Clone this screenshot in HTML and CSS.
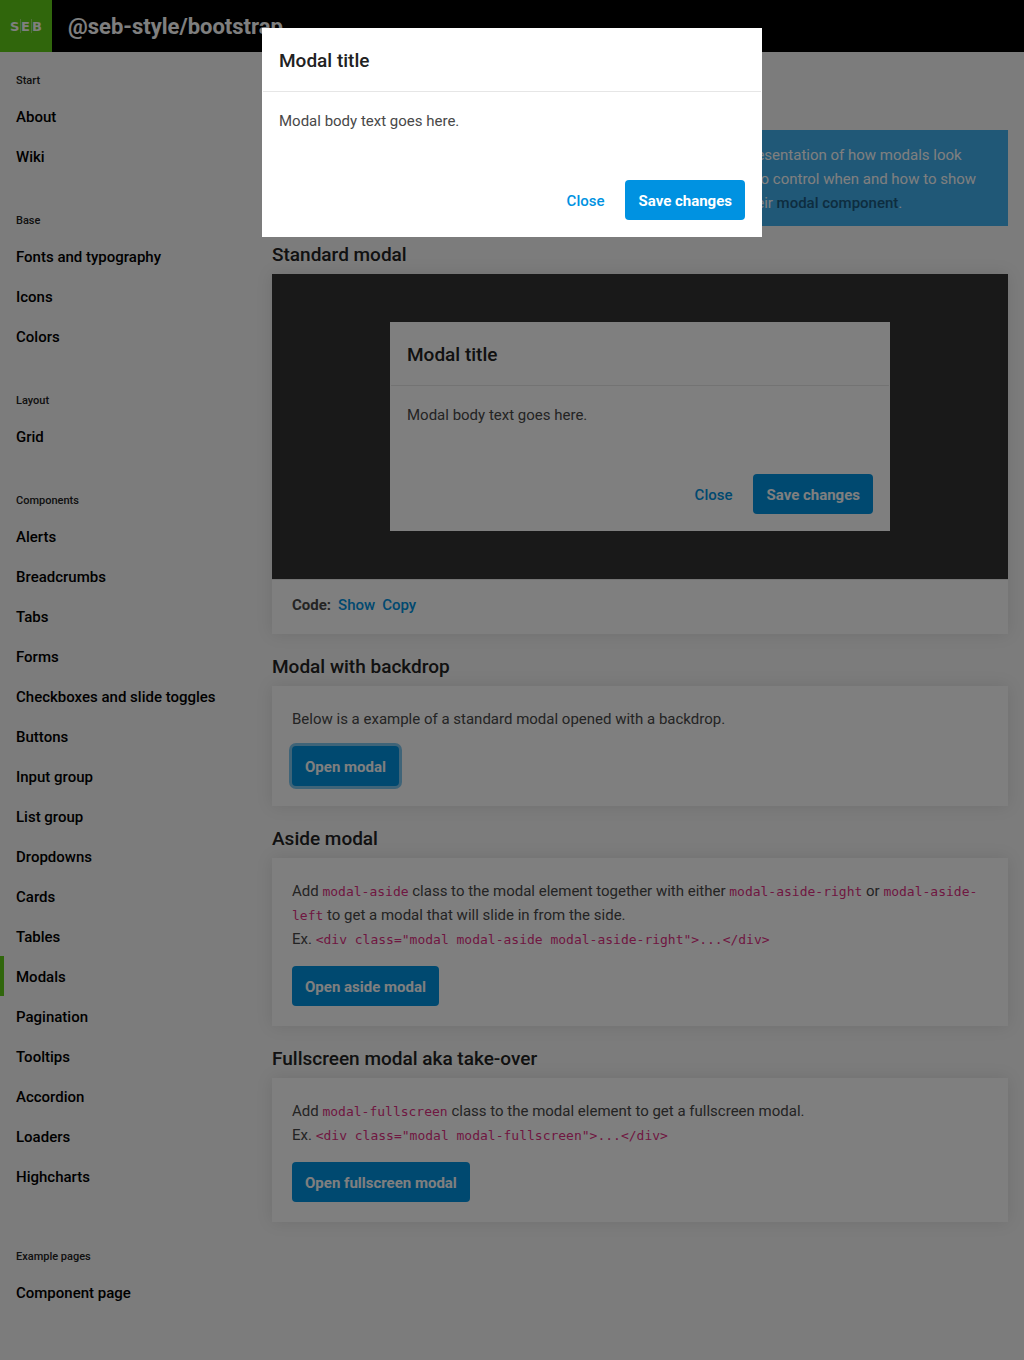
FILE: index.html
```html
<!DOCTYPE html>
<html lang="en">
<head>
<meta charset="utf-8">
<meta name="viewport" content="width=device-width, initial-scale=1">
<title>Modals - @seb-style/bootstrap</title>
<link rel="stylesheet" href="styles.css">
</head>
<body>
<header class="topbar">
  <a class="logo" href="#" aria-label="SEB">
    <svg width="52" height="52" viewBox="0 0 52 52" aria-hidden="true">
      <g class="logo-letters"><text x="10" y="31">S</text><text x="21" y="31">E</text><text x="32" y="31">B</text></g>
      <path class="logo-bars" d="M20.5 19v14M31.5 19v14"/>
    </svg>
  </a>
  <span class="brand">@seb-style/bootstrap</span>
</header>
<div class="layout">
  <nav class="sidebar" aria-label="Main">
    <section class="group">
      <h2 class="group-title">Start</h2>
      <a class="item" href="#">About</a>
      <a class="item" href="#">Wiki</a>
    </section>
    <section class="group">
      <h2 class="group-title">Base</h2>
      <a class="item" href="#">Fonts and typography</a>
      <a class="item" href="#">Icons</a>
      <a class="item" href="#">Colors</a>
    </section>
    <section class="group">
      <h2 class="group-title">Layout</h2>
      <a class="item" href="#">Grid</a>
    </section>
    <section class="group">
      <h2 class="group-title">Components</h2>
      <a class="item" href="#">Alerts</a>
      <a class="item" href="#">Breadcrumbs</a>
      <a class="item" href="#">Tabs</a>
      <a class="item" href="#">Forms</a>
      <a class="item" href="#">Checkboxes and slide toggles</a>
      <a class="item" href="#">Buttons</a>
      <a class="item" href="#">Input group</a>
      <a class="item" href="#">List group</a>
      <a class="item" href="#">Dropdowns</a>
      <a class="item" href="#">Cards</a>
      <a class="item" href="#">Tables</a>
      <a class="item active" href="#" aria-current="page">Modals</a>
      <a class="item" href="#">Pagination</a>
      <a class="item" href="#">Tooltips</a>
      <a class="item" href="#">Accordion</a>
      <a class="item" href="#">Loaders</a>
      <a class="item" href="#">Highcharts</a>
    </section>
    <section class="group examples">
      <h2 class="group-title">Example pages</h2>
      <a class="item" href="#">Component page</a>
    </section>
  </nav>
  <main class="content">
    <h1 class="page-title">Modals</h1>
    <p class="alert">Please note that the examples on this page are only to be a visual representation of how modals look<br>and that they use some scripting added by your own application code to control when and how to show<br>one. If you are using Angular then we recommend ng-bootstrap and their <a href="#">modal component</a>.</p>
    <section class="example">
      <h2 class="heading">Standard modal</h2>
      <div class="card">
        <div class="stage">
          <div class="modal">
            <div class="modal-header"><h3 class="modal-title">Modal title</h3></div>
            <div class="modal-body"><p>Modal body text goes here.</p></div>
            <div class="modal-footer">
              <button class="btn btn-link" type="button">Close</button>
              <button class="btn btn-primary" type="button">Save changes</button>
            </div>
          </div>
        </div>
        <div class="code-bar"><strong>Code:</strong><a href="#">Show</a><a href="#">Copy</a></div>
      </div>
    </section>
    <section class="example">
      <h2 class="heading">Modal with backdrop</h2>
      <div class="card card-body">
        <p>Below is a example of a standard modal opened with a backdrop.</p>
        <button class="btn btn-primary is-focused" type="button">Open modal</button>
      </div>
    </section>
    <section class="example">
      <h2 class="heading">Aside modal</h2>
      <div class="card card-body">
        <p>Add <code>modal-aside</code> class to the modal element together with either <code>modal-aside-right</code> or <code>modal-aside-left</code> to get a modal that will slide in from the side.<br>Ex. <code>&lt;div class="modal modal-aside modal-aside-right"&gt;...&lt;/div&gt;</code></p>
        <button class="btn btn-primary" type="button">Open aside modal</button>
      </div>
    </section>
    <section class="example">
      <h2 class="heading">Fullscreen modal aka take-over</h2>
      <div class="card card-body">
        <p>Add <code>modal-fullscreen</code> class to the modal element to get a fullscreen modal.<br>Ex. <code>&lt;div class="modal modal-fullscreen"&gt;...&lt;/div&gt;</code></p>
        <button class="btn btn-primary" type="button">Open fullscreen modal</button>
      </div>
    </section>
  </main>
</div>
<div class="backdrop">
  <div class="modal" role="dialog" aria-modal="true" aria-labelledby="dialog-title">
    <div class="modal-header"><h2 class="modal-title" id="dialog-title">Modal title</h2></div>
    <div class="modal-body"><p>Modal body text goes here.</p></div>
    <div class="modal-footer">
      <button class="btn btn-link" type="button">Close</button>
      <button class="btn btn-primary" type="button">Save changes</button>
    </div>
  </div>
</div>
</body>
</html>
```
FILE: styles.css
```css
*, *::before, *::after { box-sizing: border-box; }

body {
  margin: 0;
  background: #f8f8f8;
  color: #484848;
  font: 400 15px/24px Roboto, "Liberation Sans", sans-serif;
}

h1, h2, h3, p { margin: 0; }
a { color: #0092e1; font-weight: 500; text-decoration: none; }

/* Top bar */
.topbar {
  display: flex;
  align-items: center;
  gap: 16px;
  height: 52px;
  background: #000;
  color: #fff;
}
.logo { display: flex; background: #60cd18; }
.logo-letters { fill: #fff; font: 700 13px "DejaVu Sans", sans-serif; }
.logo-bars { stroke: #fff; stroke-opacity: .4; }
.brand { padding-top: 2px; font-size: 22px; font-weight: 700; line-height: 28px; }

/* Page columns */
.layout { display: flex; }
.sidebar { flex: 0 0 256px; padding: 21px 0 12px; }
.group { margin-bottom: 37px; }
.group.examples { padding-top: 16px; }
.group-title {
  margin: 0 16px 7px;
  color: #222;
  font-size: 11px;
  font-weight: 500;
  line-height: 16px;
}
.item {
  display: block;
  padding: 9px 12px 7px;
  border-left: 4px solid transparent;
  color: #000;
}
.item.active { border-left-color: #60cd18; }

.content { flex: 1; min-width: 0; padding: 24px 16px; }
.page-title { margin-bottom: 14px; font-size: 32px; font-weight: 500; line-height: 40px; }
.alert {
  margin-bottom: 17px;
  padding: 13px 20px 11px;
  background: #41b0ee;
  color: #fff;
}
.alert a { color: #1b5a80; }

.example { margin-bottom: 21px; }
.heading { margin-bottom: 7px; color: #222; font-size: 19px; font-weight: 500; }
.card { background: #fff; box-shadow: 0 0 16px rgba(0, 0, 0, .1); }
.card-body { padding: 21px 20px 20px; }
.card-body p { margin-bottom: 15px; }
.stage { padding: 48px; background: #333; }
.stage .modal { margin: 0 auto; }
.code-bar {
  display: flex;
  gap: 7px;
  padding: 13px 20px 17px;
  border-top: 1px solid #e9e9e9;
}
code { color: #df2f83; font: 13px "DejaVu Sans Mono", monospace; }

/* Buttons */
.btn {
  height: 40px;
  padding: 1px 13px 0;
  border: 0;
  border-radius: 4px;
  font: 700 15px/24px Roboto, "Liberation Sans", sans-serif;
  vertical-align: top;
}
.btn-primary { background: #0092e1; color: #fff; }
.btn-link { background: transparent; color: #0092e1; font-weight: 500; }
.is-focused { box-shadow: 0 0 0 3px rgba(0, 146, 225, .5); }

/* Modal */
.modal {
  max-width: 500px;
  border: 1px solid #fff;
  background: #fff;
}
.modal-header { padding: 17px 16px 15px; border-bottom: 1px solid #e6e6e6; }
.modal-title { color: #222; font-size: 19px; font-weight: 500; line-height: 30px; }
.modal-body { padding: 17px 16px 16px; }
.modal-body p { margin-bottom: 15px; }
.modal-footer { display: flex; justify-content: flex-end; gap: 8px; padding: 16px; }
.backdrop {
  position: fixed;
  inset: 0;
  padding: 28px 16px;
  background: rgba(0, 0, 0, .5);
}
.backdrop .modal { margin: 0 auto; }
```
